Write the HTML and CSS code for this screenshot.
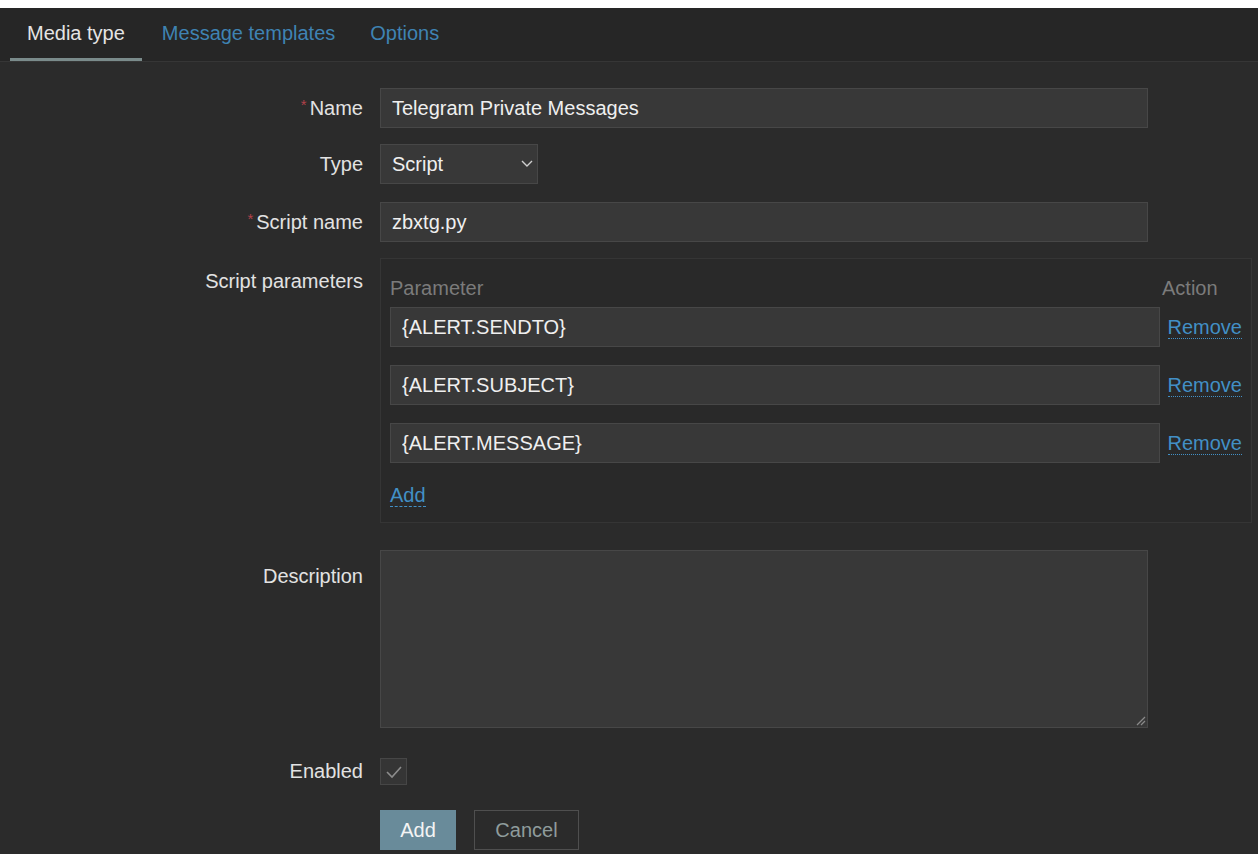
FILE: index.html
```html
<!DOCTYPE html>
<html lang="en">
<head>
<meta charset="utf-8">
<title>Media type</title>
<link rel="stylesheet" href="styles.css">
</head>
<body>
<div class="page">
  <nav class="tabs">
    <a class="tab active">Media type</a>
    <a class="tab">Message templates</a>
    <a class="tab">Options</a>
  </nav>

  <form class="form">
    <label class="label"><span class="req">*</span>Name</label>
    <div class="field"><input class="input wide" type="text" value="Telegram Private Messages"></div>

    <label class="label">Type</label>
    <div class="field field-type">
      <div class="select">
        <span>Script</span>
        <svg class="chev" width="12" height="8" viewBox="0 0 12 8"><polyline points="1,1 6,6 11,1" fill="none" stroke="#cfcfcf" stroke-width="1.4"/></svg>
      </div>
    </div>

    <label class="label"><span class="req">*</span>Script name</label>
    <div class="field"><input class="input wide" type="text" value="zbxtg.py"></div>

    <label class="label label-params">Script parameters</label>
    <div class="field">
      <div class="params">
        <div class="params-head">
          <span>Parameter</span>
          <span class="action-col">Action</span>
        </div>
        <div class="param-row">
          <input class="input param" type="text" value="{ALERT.SENDTO}">
          <a class="link remove">Remove</a>
        </div>
        <div class="param-row">
          <input class="input param" type="text" value="{ALERT.SUBJECT}">
          <a class="link remove">Remove</a>
        </div>
        <div class="param-row">
          <input class="input param" type="text" value="{ALERT.MESSAGE}">
          <a class="link remove">Remove</a>
        </div>
        <a class="link add-param">Add</a>
      </div>
    </div>

    <label class="label label-desc">Description</label>
    <div class="field field-desc">
      <div class="textarea-wrap">
        <textarea class="textarea"></textarea>
        <svg class="grip" width="12" height="12" viewBox="0 0 12 12"><path d="M11 3 L3 11 M11 7 L7 11" stroke="#8a8a8a" stroke-width="1.2"/></svg>
      </div>
    </div>

    <label class="label label-enabled">Enabled</label>
    <div class="field field-enabled">
      <span class="checkbox">
        <svg width="18" height="14" viewBox="0 0 18 14"><polyline points="2,7 7,12 16,2" fill="none" stroke="#8c8c8c" stroke-width="1.6"/></svg>
      </span>
    </div>

    <div></div>
    <div class="field buttons">
      <button type="button" class="btn primary">Add</button>
      <button type="button" class="btn secondary">Cancel</button>
    </div>
  </form>
</div>
</body>
</html>
```

FILE: styles.css
```css
html {
  background: #ffffff;
}

body {
  margin: 0;
  padding-top: 8px;
  font-family: "Liberation Sans", Arial, sans-serif;
  font-size: 20px;
  color: #e2e2e2;
}

.page {
  background: #2b2b2b;
  height: 846px;
  overflow: hidden;
}

/* tab strip */
.tabs {
  display: flex;
  height: 53px;
  padding-left: 10px;
  background: #262626;
  border-bottom: 1px solid #363636;
}

.tab {
  display: flex;
  align-items: center;
  box-sizing: border-box;
  height: 53px;
  padding: 0 17px 0 17px;
  color: #3f83b3;
  border-bottom: 3px solid transparent;
}

.tab + .tab {
  padding-left: 20px;
  padding-right: 15px;
}

.tab.active {
  color: #e4e4e4;
  border-bottom-color: #7a8b8b;
}

/* form grid */
.form {
  display: grid;
  grid-template-columns: 363px 1fr;
  column-gap: 17px;
  padding-top: 26px;
  align-items: start;
}

.label {
  text-align: right;
  line-height: 40px;
  white-space: nowrap;
}

.req {
  position: relative;
  top: -5px;
  color: #b1414a;
  font-size: 15px;
  margin-right: 3px;
}

.field {
  margin-bottom: 16px;
}

.field-type {
  margin-bottom: 18px;
}

.input {
  box-sizing: border-box;
  height: 40px;
  background: #383838;
  border: 1px solid #474747;
  color: #efefef;
  font: inherit;
  padding: 0 11px;
  outline: none;
}

.input.wide {
  width: 768px;
  display: block;
}

.select {
  box-sizing: border-box;
  width: 158px;
  height: 40px;
  display: flex;
  align-items: center;
  justify-content: space-between;
  padding: 0 4px 0 11px;
  background: #383838;
  border: 1px solid #474747;
  color: #efefef;
}

/* script parameters table */
.label-params {
  padding-top: 3px;
}

.params {
  box-sizing: border-box;
  width: 872px;
  border: 1px solid #353535;
  background: #292929;
  padding: 13px 9px 15px 9px;
}

.params-head {
  display: flex;
  justify-content: space-between;
  color: #7b7b7b;
  line-height: 32px;
  margin-bottom: 3px;
}

.action-col {
  width: 76px;
  margin-right: 4px;
}

.param-row {
  display: flex;
  align-items: center;
  margin-bottom: 18px;
}

.input.param {
  width: 771px;
  margin-right: 8px;
}

.link {
  color: #4290c6;
  cursor: pointer;
}

.remove {
  border-bottom: 1px dotted #4290c6;
  line-height: 22px;
}

.add-param {
  display: inline-block;
  border-bottom: 1px dashed #4290c6;
  line-height: 22px;
  margin-top: 3px;
}

/* description */
.label-desc {
  margin-top: 11px;
  padding-top: 6px;
}

.field-desc {
  margin-top: 11px;
  margin-bottom: 30px;
}

.textarea-wrap {
  position: relative;
  width: 768px;
  height: 178px;
}

.textarea {
  box-sizing: border-box;
  width: 100%;
  height: 100%;
  display: block;
  background: #383838;
  border: 1px solid #474747;
  resize: none;
  outline: none;
}

.grip {
  position: absolute;
  right: 2px;
  bottom: 2px;
}

/* enabled */
.label-enabled {
  line-height: 27px;
}

.field-enabled {
  margin-bottom: 25px;
}

.checkbox {
  box-sizing: border-box;
  display: flex;
  align-items: center;
  justify-content: center;
  width: 27px;
  height: 27px;
  background: #353535;
  border: 1px solid #464646;
}

/* buttons */
.buttons {
  display: flex;
  gap: 18px;
}

.btn {
  font: inherit;
  height: 40px;
  box-sizing: border-box;
  padding: 0;
}

.btn.primary {
  width: 76px;
  background: #698b9a;
  border: 1px solid #698b9a;
  color: #f4f4f4;
}

.btn.secondary {
  width: 105px;
  background: transparent;
  border: 1px solid #4f4f4f;
  color: #8f9c9c;
}
```
